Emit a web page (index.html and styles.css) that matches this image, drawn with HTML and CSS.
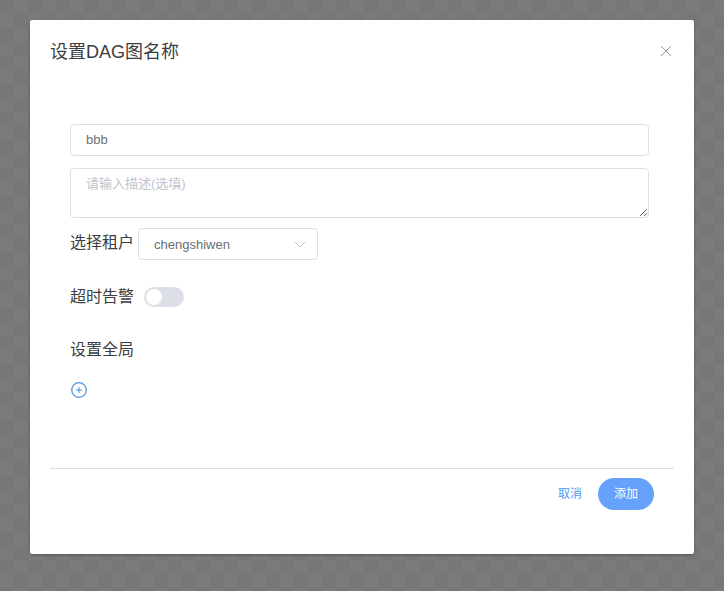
FILE: index.html
```html
<!DOCTYPE html>
<html lang="zh-CN">
<head>
  <meta charset="UTF-8" />
  <meta name="viewport" content="width=device-width, initial-scale=1.0"/>
  <title>设置DAG图名称</title>
  <link rel="stylesheet" href="styles.css">
</head>
<body>

  <div class="dialogo">
    <div class="cabecalho">
      <span class="titulo">设置DAG图名称</span>
      <svg class="fechar" width="12" height="12" viewBox="0 0 12 12">
        <path d="M1 1L11 11M11 1L1 11" stroke="#909399" stroke-width="1" fill="none"/>
      </svg>
    </div>

    <div class="corpo">
      <input class="campo" type="text" value="bbb" />
      <textarea class="area" placeholder="请输入描述(选填)"></textarea>

      <div class="linha linha-tenant">
        <span class="rotulo">选择租户</span>
        <div class="selecao">
          <span>chengshiwen</span>
          <svg width="12" height="7" viewBox="0 0 12 7">
            <path d="M1 1L6 6L11 1" stroke="#c0c4cc" stroke-width="1" fill="none"/>
          </svg>
        </div>
      </div>

      <div class="linha linha-alerta">
        <span class="rotulo">超时告警</span>
        <div class="chave"><div class="botao-chave"></div></div>
      </div>

      <div class="rotulo rotulo-global">设置全局</div>

      <svg class="adicionar" width="16" height="16" viewBox="0 0 16 16">
        <circle cx="8" cy="8" r="7.3" stroke="#4a90e2" stroke-width="1.2" fill="none"/>
        <path d="M8 5V11M5 8H11" stroke="#4a90e2" stroke-width="1" fill="none"/>
      </svg>
    </div>

    <div class="rodape">
      <a class="cancelar">取消</a>
      <button class="adicionar-btn">添加</button>
    </div>
  </div>

</body>
</html>
```

FILE: styles.css
```css
* {
  box-sizing: border-box;
}

html, body {
  height: 100%;
}

body {
  margin: 0;
  padding: 20px 30px 0;
  overflow: hidden;
  font-family: "Liberation Sans", "Noto Sans CJK SC", sans-serif;
  background: repeating-conic-gradient(#7b7b7b 0 25%, #777 0 50%) 0 0 / 28px 28px;
}

.dialogo {
  width: 664px;
  height: 534px;
  background: #fff;
  border-radius: 2px;
  box-shadow: 0 1px 3px rgba(0,0,0,0.3);
  padding: 0 20px;
  display: flex;
  flex-direction: column;
}

.cabecalho {
  display: flex;
  justify-content: space-between;
  align-items: center;
  height: 62px;
}

.titulo {
  font-size: 18px;
  line-height: 24px;
  padding-top: 2px;
  color: #3c3d40;
}

.fechar {
  margin-right: 2px;
}

.corpo {
  padding: 42px 25px 0 20px;
  display: flex;
  flex-direction: column;
  align-items: flex-start;
  height: 386px;
}

.campo {
  width: 579px;
  height: 32px;
  border: 1px solid #dcdfe6;
  border-radius: 4px;
  padding: 0 15px 2px;
  font-family: inherit;
  font-size: 13px;
  color: #6b6e73;
  outline: none;
}

.area {
  display: block;
  width: 579px;
  height: 50px;
  margin-top: 12px;
  border: 1px solid #dcdfe6;
  border-radius: 4px;
  padding: 5px 15px;
  font-family: inherit;
  font-size: 13px;
  line-height: 20px;
  color: #606266;
  outline: none;
}

.area::placeholder {
  color: #c0c4cc;
}

.linha {
  display: flex;
  align-items: center;
}

.linha-tenant {
  margin-top: 10px;
  gap: 4px;
}

.linha-tenant .rotulo {
  padding-bottom: 3px;
}

.linha-alerta {
  margin-top: 27px;
  gap: 10px;
}

.rotulo {
  font-size: 16px;
  line-height: 20px;
  color: #3c3d40;
}

.selecao {
  width: 180px;
  height: 32px;
  border: 1px solid #dcdfe6;
  border-radius: 4px;
  padding: 0 11px 0 15px;
  display: flex;
  align-items: center;
  justify-content: space-between;
  font-size: 13px;
  color: #6b6e73;
}

.chave {
  width: 40px;
  height: 20px;
  border-radius: 10px;
  background: #dcdfe6;
  padding: 2px;
}

.botao-chave {
  width: 16px;
  height: 16px;
  border-radius: 50%;
  background: #fff;
}

.rotulo-global {
  margin-top: 33px;
}

.adicionar {
  margin-top: 22px;
  margin-left: 1px;
}

.rodape {
  border-top: 1px solid #dcdfe6;
  padding: 9px 20px 0 0;
  display: flex;
  justify-content: flex-end;
  align-items: center;
  gap: 16px;
}

.cancelar {
  font-size: 12px;
  line-height: 14px;
  color: #4a9cf5;
}

.adicionar-btn {
  width: 56px;
  height: 32px;
  padding: 0 0 3px;
  border: none;
  border-radius: 20px;
  background: #66a1fb;
  color: #fff;
  font-family: inherit;
  font-size: 12px;
}
```
